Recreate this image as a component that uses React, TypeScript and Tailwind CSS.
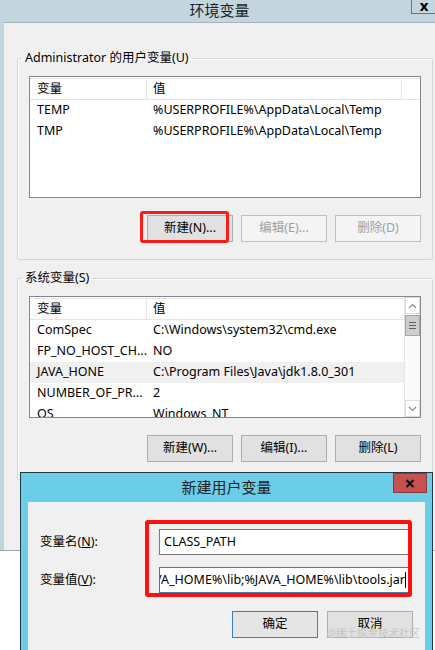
import React from "react";

const FONT = "font-['Noto_Sans','Noto_Sans_CJK_SC',sans-serif]";

type Row = { name: string; value: string; selected?: boolean };

const userVars: Row[] = [
  { name: "TEMP", value: "%USERPROFILE%\\AppData\\Local\\Temp" },
  { name: "TMP", value: "%USERPROFILE%\\AppData\\Local\\Temp" },
];

const sysVars: Row[] = [
  { name: "ComSpec", value: "C:\\Windows\\system32\\cmd.exe" },
  { name: "FP_NO_HOST_CH...", value: "NO" },
  { name: "JAVA_HONE", value: "C:\\Program Files\\Java\\jdk1.8.0_301", selected: true },
  { name: "NUMBER_OF_PR...", value: "2" },
  { name: "OS", value: "Windows_NT" },
];

function Btn({ label, disabled, primary }: { label: string; disabled?: boolean; primary?: boolean }) {
  return (
    <div
      className={
        "w-[86px] h-[27px] flex items-center justify-center text-[12.5px] border " +
        (disabled
          ? "bg-[#f4f4f4] border-[#bfbfbf] text-[#a0a0a0]"
          : primary
          ? "bg-[#e5e5e5] border-[#3c7fb1] text-black"
          : "bg-[#e1e1e1] border-[#adadad] text-black")
      }
    >
      {label}
    </div>
  );
}

function Chevron({ up }: { up?: boolean }) {
  return (
    <svg width="9" height="6" viewBox="0 0 9 6">
      <polyline
        points={up ? "1,5 4.5,1.5 8,5" : "1,1 4.5,4.5 8,1"}
        fill="none"
        stroke="#8a8a8a"
        strokeWidth="1.2"
      />
    </svg>
  );
}

function Scrollbar() {
  return (
    <div className="w-[16px] h-full flex flex-col border-l border-[#e6e6e6] bg-[#fafafa]">
      <div className="h-[17px] flex items-center justify-center border border-[#dcdcdc] bg-white">
        <Chevron up />
      </div>
      <div className="h-[21px] mt-[1px] flex flex-col items-center justify-center gap-[2px] bg-[#cdcdcd] border border-[#a6a6a6]">
        <div className="w-[7px] h-[1px] bg-[#606060]" />
        <div className="w-[7px] h-[1px] bg-[#606060]" />
        <div className="w-[7px] h-[1px] bg-[#606060]" />
      </div>
      <div className="flex-1" />
      <div className="h-[17px] flex items-center justify-center border border-[#dcdcdc] bg-white">
        <Chevron />
      </div>
    </div>
  );
}

function ListBox({ rows, scroll }: { rows: Row[]; scroll?: boolean }) {
  return (
    <div className="h-[122px] border border-[#828790] bg-white flex overflow-hidden">
      <div className="flex-1 flex flex-col pt-[1px]">
        <div className="h-[22px] shrink-0 flex border-t border-b border-[#e5e5e5] text-[12.5px]">
          <div className="w-[117px] pl-[7px] border-r border-[#e5e5e5] flex items-center">变量</div>
          <div className={"w-[255px] pl-[6px] flex items-center " + (scroll ? "" : "border-r border-[#e5e5e5]")}>值</div>
          <div className="flex-1" />
        </div>
        {rows.map((r) => (
          <div
            key={r.name}
            className={"h-[21px] shrink-0 flex items-center text-[12.5px] text-black whitespace-nowrap " + (r.selected ? "bg-[#f0f0f0]" : "")}
          >
            <div className="w-[117px] pl-[7px] shrink-0">{r.name}</div>
            <div className="pl-[6px]">{r.value}</div>
          </div>
        ))}
      </div>
      {scroll && <Scrollbar />}
    </div>
  );
}

function Group({ title, children }: { title: string; children: React.ReactNode }) {
  return (
    <fieldset className="w-[416px] ml-[13px] border border-[#d5d5d5] rounded-[2px] px-[11px] pb-[17px] shadow-[inset_1px_1px_0_#ffffff]">
      <legend className="ml-[-7px] px-[3px] text-[12.5px] leading-[18px] text-black">{title}</legend>
      <div className="mt-[9px]">{children}</div>
    </fieldset>
  );
}

export default function App() {
  return (
    <div className={"relative w-[435px] h-[650px] bg-white overflow-hidden " + FONT}>
      {/* 环境变量 window */}
      <div className="h-[551px] bg-[#c3d6df] pl-[4px] flex flex-col border-b border-[#9aa8ae]">
        <div className="relative h-[23px] flex items-center justify-center text-[15px] text-[#1e1e1e] border-b border-[#a2b4bc]">
          <span className="-mt-[2px]">环境变量</span>
          <div className="absolute right-[-2px] top-[-8px] w-[26px] h-[22px] border border-[#66777f] flex items-start justify-center">
            <span className="text-[15px] font-bold leading-[22px] mt-[1px] text-black">x</span>
          </div>
        </div>
        <div className="flex-1 bg-[#f0f0f0] pt-[26px]">
          <Group title="Administrator 的用户变量(U)">
            <ListBox rows={userVars} />
            <div className="relative flex justify-end gap-2 mt-[17px]">
              <Btn label="新建(N)..." />
              <Btn label="编辑(E)..." disabled />
              <Btn label="删除(D)" disabled />
              <div className="absolute left-[111px] top-[-4px] w-[89px] h-[32px] border-[3px] border-[#ff1a1a] rounded-[3px]" />
            </div>
          </Group>
          <div className="h-[9px]" />
          <Group title="系统变量(S)">
            <ListBox rows={sysVars} scroll />
            <div className="flex justify-end gap-2 mt-[17px]">
              <Btn label="新建(W)..." />
              <Btn label="编辑(I)..." />
              <Btn label="删除(L)" />
            </div>
          </Group>
        </div>
      </div>

      {/* 新建用户变量 dialog */}
      <div className="absolute left-[20px] top-[472px] w-[413px] h-[200px] bg-[#6bcde8] border border-[#223848] flex flex-col">
        <div className="relative h-[29px] flex items-center justify-center text-[15px] text-[#1e1e1e]">
          <span>新建用户变量</span>
          <div className="absolute right-[5px] top-0 w-[34px] h-[20px] bg-[#c75050] border border-[#8c3b3b] flex items-center justify-center">
            <svg width="10" height="9" viewBox="0 0 10 9">
              <path d="M1.5 1 L8.5 8 M8.5 1 L1.5 8" stroke="#111" strokeWidth="2.2" />
            </svg>
          </div>
        </div>
        <div className="relative flex-1 mx-[7px] bg-[#f0f0f0] pt-[27px] pl-[12px] pr-[12px] text-[12.5px] text-black">
          <div className="flex items-center h-[26px]">
            <div className="w-[119px]">
              变量名(<span className="underline">N</span>):
            </div>
            <div className="w-[250px] h-[26px] bg-white border border-[#7a7a7a] flex items-center pl-[4px]">CLASS_PATH</div>
          </div>
          <div className="flex items-center h-[26px] mt-[12px]">
            <div className="w-[119px]">
              变量值(<span className="underline">V</span>):
            </div>
            <div className="w-[250px] h-[26px] bg-white border border-[#3c7fb1] flex items-center justify-end overflow-hidden whitespace-nowrap pr-[2px]">
              <span>.;%JAVA_HOME%\lib;%JAVA_HOME%\lib\tools.jar</span>
              <span className="w-[1px] h-[16px] bg-black shrink-0" />
            </div>
          </div>
          <div className="flex justify-end gap-[9px] mt-[18px]">
            <Btn label="确定" primary />
            <Btn label="取消" />
          </div>
          <div className="absolute left-[117px] top-[18px] w-[267px] h-[77px] border-[4px] border-[#ff1010] rounded-[3px]" />
          <div className="absolute right-[5px] top-[124px] text-[10.5px] leading-[14px] text-[#c4c4c4] opacity-90">@稀土掘金技术社区</div>
        </div>
      </div>
    </div>
  );
}
